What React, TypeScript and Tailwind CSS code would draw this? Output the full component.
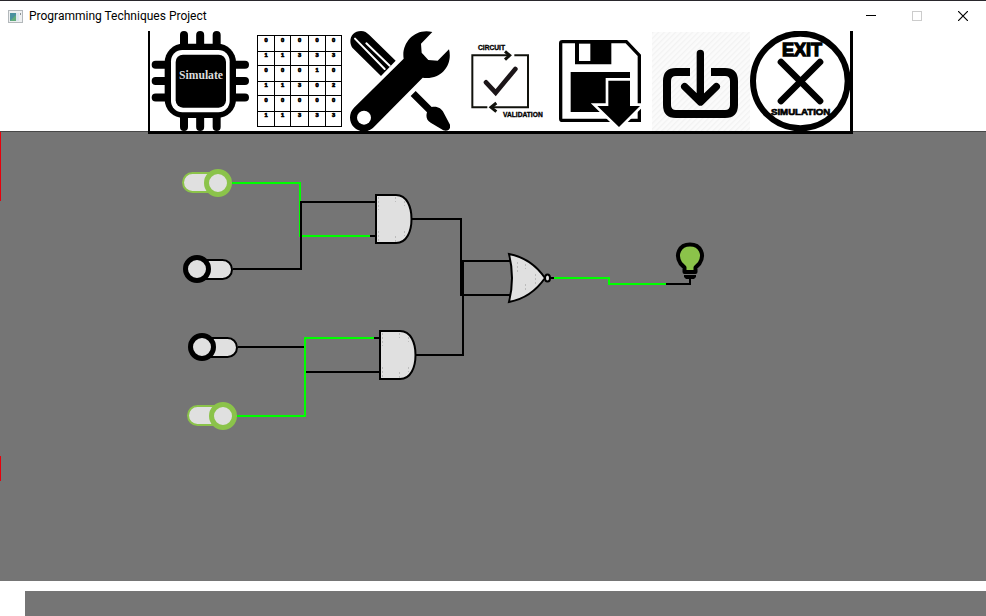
import type { ReactNode } from "react";

const columns = [23, 73, 122, 175, 227, 275];
const rows = [31, 79, 121, 169, 211, 259, 303];
const cells = ["00000", "11333", "00010", "11302", "00000", "11333"];
const sans = "'Liberation Sans', Arial, sans-serif";

function ToolButton({ label, box, children }: { label: string; box: string; children: ReactNode }) {
  return (
    <button type="button" aria-label={label} className="size-[100px] shrink-0 bg-white">
      <svg viewBox={box} className="block size-full" aria-hidden="true">
        {children}
      </svg>
    </button>
  );
}

function Simulate() {
  return (
    <ToolButton label="Simulate" box="15 18 300 300">
      <path
        d="M117 30V60M165.500 30V60M215 30V60M117 270V306M165.500 270V306M215 270V306M32 119.500H65M32 168H65M32 217.500H65M265 119.500H300M265 168H300M265 217.500H300"
        stroke="#000"
        strokeWidth="24"
        strokeLinecap="round"
      />
      <rect x="59" y="56" width="214" height="223" rx="56" />
      <rect x="78" y="75" width="176" height="187" rx="34" fill="#fff" />
      <rect x="92" y="89" width="151" height="159" rx="22" />
      <text x="168" y="162" textAnchor="middle" fill="#ddd" fontSize="35" fontWeight="700" fontFamily="'Liberation Serif', 'Times New Roman', serif">
        Simulate
      </text>
    </ToolButton>
  );
}

function TruthTable() {
  return (
    <ToolButton label="Truth table" box="0 18 300 300">
      <g stroke="#000" strokeWidth="3" shapeRendering="crispEdges">
        {columns.map((x) => (
          <line key={x} x1={x} x2={x} y1="30" y2="304" />
        ))}
        {rows.map((y) => (
          <line key={y} x1="22" x2="276" y1={y} y2={y} />
        ))}
      </g>
      <g fontSize="17" fontWeight="700" fontFamily={sans} textAnchor="middle" stroke="#000" strokeWidth="2">
        {cells.map((row, r) =>
          row.split("").map((digit, c) => (
            <text key={`${r}-${c}`} x={(columns[c] + columns[c + 1]) / 2} y={rows[r] + (r % 2 ? 17 : 19)}>
              {digit}
            </text>
          )),
        )}
      </g>
    </ToolButton>
  );
}

function Tools() {
  return (
    <ToolButton label="Components" box="15 18 300 300">
      <path d="M108 153L22 68C8 46 20 18 48 18C58 18 66 23 73 30L152 107Z" />
      <path d="M64 55L134 122M30 41L119 132" stroke="#fff" strokeWidth="6" strokeLinecap="round" />
      <path d="M27 248L176 101C168 54 210 8 262 21L228 56L230 83L250 105L278 107L312 73C324 118 290 166 233 158L86 307C68 325 42 322 27 307C11 291 11 264 27 248Z" />
      <circle cx="57" cy="278" r="21" fill="#fff" />
      <path d="M212 198L260 246C278 243 289 250 296 263L315 299C318 313 308 320 295 316L257 293C245 286 242 275 246 262L197 213Z" />
    </ToolButton>
  );
}

function Validation() {
  return (
    <ToolButton label="Circuit validation" box="-15 18 300 300">
      <g fill="none" stroke="#11120c" strokeWidth="6">
        <path d="M97 247H52V91H160M178 91H219V247H110" />
        <path d="M150 79L164 91L150 104M124 234L108 247L124 260" strokeWidth="9" />
        <path d="M93 172L122 203L181 132" stroke="#1b1518" strokeWidth="14" strokeLinecap="round" />
      </g>
      <g fontSize="20" fontWeight="700" fontFamily={sans} stroke="#000" strokeWidth="1">
        <text x="69" y="74">CIRCUIT</text>
        <text x="144" y="276">VALIDATION</text>
      </g>
    </ToolButton>
  );
}

function Save() {
  return (
    <ToolButton label="Save" box="0 18 300 300">
      <path d="M37 50H229L268 91V286H37Q32 286 32 281V55Q32 50 37 50Z" fill="none" stroke="#000" strokeWidth="10" />
      <path d="M75 52H184V118H75Z" />
      <path d="M87 56H121V108H87Z" fill="#fff" />
      <path d="M62 141H240V261H62Z" />
      <path d="M175 167H240V243H270L207 306L142 243H175Z" stroke="#fff" strokeWidth="16" style={{ paintOrder: "stroke" }} />
    </ToolButton>
  );
}

function Load() {
  return (
    <ToolButton label="Load" box="6 18 300 300">
      <defs>
        <pattern id="hatch" width="12" height="12" patternUnits="userSpaceOnUse" patternTransform="rotate(45)">
          <rect width="12" height="12" fill="#fbfbfb" />
          <rect width="4" height="12" fill="#f2f2f2" />
        </pattern>
      </defs>
      <rect x="12" y="21" width="294" height="297" fill="url(#hatch)" />
      <g fill="none" stroke="#000" strokeWidth="24">
        <path d="M126 141H84Q57 141 57 168V240Q57 267 84 267H231Q258 267 258 240V168Q258 141 231 141H189" />
        <path d="M157 85V225M110 185L157.500 231L205 185" strokeWidth="22" strokeLinecap="round" strokeLinejoin="round" />
      </g>
    </ToolButton>
  );
}

function Exit() {
  return (
    <ToolButton label="Exit simulation" box="15 18 300 300">
      <circle cx="166" cy="168" r="142" fill="none" stroke="#000" strokeWidth="18" />
      <path d="M108 111L225 228M225 111L108 228" stroke="#000" strokeWidth="20" strokeLinecap="round" />
      <g fontWeight="700" fontFamily={sans} textAnchor="middle" stroke="#000">
        <text x="171" y="92" fontSize="54" strokeWidth="4">EXIT</text>
        <text x="167" y="269" fontSize="29" strokeWidth="2">SIMULATION</text>
      </g>
    </ToolButton>
  );
}

function Toggle({ name, on, place }: { name: string; on: boolean; place: string }) {
  const color = on ? "#8bc34a" : "#000";
  return (
    <label className={`absolute ${place}`}>
      <input type="checkbox" defaultChecked={on} aria-label={name} className="absolute inset-0 size-full appearance-none" />
      <svg width="52" height="28" className="block" aria-hidden="true">
        <rect x="2" y={on ? 4 : 5} width="47" height="19" rx="9.500" fill="#e0e0e0" stroke={color} strokeWidth="2" />
        <circle cx={on ? 37 : 14} cy="14" r="11.500" fill="#e0e0e0" stroke={color} strokeWidth="5" />
      </svg>
    </label>
  );
}

function Circuit() {
  return (
    <svg viewBox="0 132 986 449" width="986" height="449" className="block" role="img" aria-label="Logic circuit">
      <g fill="none" strokeWidth="2">
        <path d="M232 183H300V236H370" stroke="#0f0" />
        <path d="M233 269H301V202H376M370 236H376M238 347H305M305 372H380M374 338H380" stroke="#000" />
        <path d="M237 416H305V338H374" stroke="#0f0" />
        <path d="M412 219H461V295H512M416 355H463V261H512M666 284H690V277M549 278H554" stroke="#000" />
        <path d="M554 278H609V284H666" stroke="#0f0" />
      </g>
      <g fill="#e0e0e0" stroke="#000" strokeWidth="2">
        <path d="M376 195H396C407 195 411.500 207 411.500 219C411.500 231 407 243 396 243H376Z" />
        <path d="M380 331H400C411 331 415.500 343 415.500 355C415.500 367 411 379 400 379H380Z" />
        <path d="M509 254C525 257 536 265 545 278C536 291 525 299 509 302C513 286 513 270 509 254Z" />
        <ellipse cx="547.500" cy="278" rx="2.500" ry="3.500" />
      </g>
      <g stroke="#bcbcbc" strokeDasharray="2 2">
        <path d="M378.500 197V210M378.500 231V242M395.500 197V202M395.500 236V242M404.500 201V206M404.500 231V236" />
        <path d="M382.500 333V346M382.500 367V378M399.500 333V338M399.500 372V378M408.500 337V342M408.500 367V372" />
        <path d="M517.500 262V274M525.500 264V269M525.500 284V292M535.500 274V286" />
      </g>
      <path d="M684.500 272V267.500L680.500 263.500C675 255 679 244.500 690 244.500C701 244.500 705 255 699.500 263.500L695.500 267.500V272Z" fill="#8bc34a" stroke="#000" strokeWidth="4" strokeLinejoin="round" />
      <path d="M684 275H696V277L694 279H686L684 277Z" />
    </svg>
  );
}

export default function App() {
  return (
    <div className="min-h-screen overflow-hidden bg-white text-black">
      <div className="h-px bg-[#29272c]" />
      <header className="flex h-[30px] items-center pl-2">
        <svg width="15" height="13" className="shrink-0" aria-hidden="true">
          <rect x="0.500" y="0.500" width="14" height="12" fill="#eef0f1" stroke="#b3b8bb" />
          <rect x="2" y="3" width="6" height="8" fill="#4a91a0" />
          <path d="M2 11L8 5V11Z" fill="#62ac7b" />
          <rect x="8" y="3" width="3" height="8" fill="#dce6ef" />
          <rect x="12" y="3" width="1" height="2" fill="#8c9294" />
        </svg>
        <h1 className="ml-1.5 font-['Roboto','Open_Sans',sans-serif] text-[12px] leading-4">Programming Techniques Project</h1>
        <div className="ml-auto flex">
          <button type="button" aria-label="Minimize" className="flex h-[30px] w-[46px] items-center justify-center">
            <svg width="10" height="10" aria-hidden="true"><path d="M0 4.500H10" stroke="#000" /></svg>
          </button>
          <button type="button" aria-label="Maximize" disabled className="flex h-[30px] w-[46px] items-center justify-center">
            <svg width="10" height="10" aria-hidden="true"><rect x="0.500" y="0.500" width="9" height="9" fill="none" stroke="#ccc" /></svg>
          </button>
          <button type="button" aria-label="Close" className="flex h-[30px] w-[46px] items-center justify-center">
            <svg width="10" height="10" aria-hidden="true"><path d="M0 0L10 10M10 0L0 10" stroke="#000" strokeWidth="1.200" /></svg>
          </button>
        </div>
      </header>
      <nav aria-label="Simulation" className="relative z-10 -mb-[3px] flex pl-[148px]">
        <div className="flex border-r-[3px] border-b-[3px] border-l-2 border-black">
          <Simulate />
          <TruthTable />
          <Tools />
          <Validation />
          <Save />
          <Load />
          <Exit />
        </div>
      </nav>
      <main className="relative h-[450px] overflow-hidden border-t border-[#484848] bg-[#757575]">
        <Circuit />
        <Toggle name="Switch 1" on place="left-[181px] top-[37px]" />
        <Toggle name="Switch 2" on={false} place="left-[183px] top-[123px]" />
        <Toggle name="Switch 3" on={false} place="left-[188px] top-[201px]" />
        <Toggle name="Switch 4" on place="left-[186px] top-[270px]" />
        <span className="absolute top-0 left-0 h-[69px] w-px bg-red-600" />
        <span className="absolute top-[324px] left-0 h-[25px] w-px bg-red-600" />
      </main>
      <footer className="pt-2.5 pl-[25px]">
        <div className="h-[25px] bg-[#757575]" />
      </footer>
    </div>
  );
}
